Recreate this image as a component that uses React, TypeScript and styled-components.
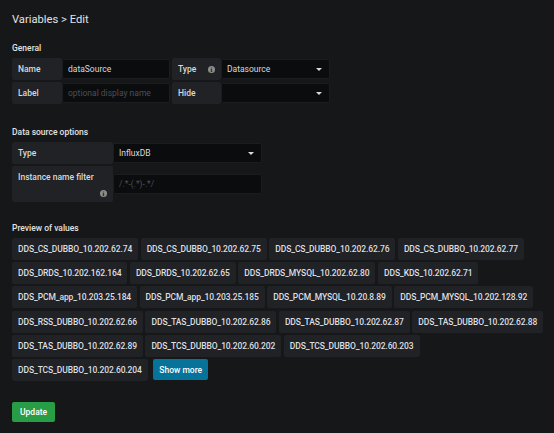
import React from 'react'
import styled, { createGlobalStyle } from 'styled-components'

const GlobalStyle = createGlobalStyle`
  html, body {
    margin: 0;
    padding: 0;
    background: #161719;
  }
  body {
    font-family: Roboto, 'Liberation Sans', sans-serif;
    color: #d8d9da;
    font-size: 8.5px;
  }
`

const Page = styled.div`
  width: 554px;
  height: 433px;
  box-sizing: border-box;
  padding: 12px 2px 0 12px;
  overflow: hidden;
`

const Title = styled.h2`
  margin: 0;
  font-size: 11.2px;
  line-height: 16px;
  font-weight: 400;
  color: #e3e3e3;
`

const SectionHeading = styled.h5<{ $top: number; $bottom: number }>`
  margin: ${(p) => p.$top}px 0 ${(p) => p.$bottom}px;
  font-size: 8.5px;
  line-height: 12px;
  font-weight: 500;
  color: #e3e3e3;
`

const FormRow = styled.div`
  display: flex;
  align-items: center;
  gap: 2px;
  margin-bottom: 2px;
`

const Field = styled.div`
  display: flex;
  align-items: center;
`

const Label = styled.label<{ $width: number; $tall?: boolean }>`
  box-sizing: border-box;
  width: ${(p) => p.$width}px;
  height: ${(p) => (p.$tall ? 36 : 22)}px;
  padding: ${(p) => (p.$tall ? '6px 6px 0' : '0 6px')};
  display: flex;
  align-items: ${(p) => (p.$tall ? 'flex-start' : 'center')};
  justify-content: space-between;
  position: relative;
  background: #202226;
  border-radius: 2px;
  font-weight: 500;
  color: #d8d9da;
`

const InfoIcon = styled.span<{ $corner?: boolean }>`
  width: 7px;
  height: 7px;
  border-radius: 50%;
  background: #8e8e8e;
  color: #202226;
  font-size: 6px;
  font-weight: 700;
  line-height: 7px;
  text-align: center;
  font-family: 'DejaVu Serif', serif;
  ${(p) => (p.$corner ? 'position: absolute; right: 6px; bottom: 5px;' : '')}
`

const Input = styled.input<{ $width: number }>`
  box-sizing: border-box;
  width: ${(p) => p.$width}px;
  height: 20px;
  padding: 0 5px;
  background: #0b0c0e;
  border: 1px solid #1b1c1f;
  border-radius: 2px;
  color: #d8d9da;
  font-family: inherit;
  font-size: 8.5px;
  outline: none;
  &::placeholder {
    color: #4d4f53;
  }
`

const Select = styled.div<{ $width: number }>`
  box-sizing: border-box;
  width: ${(p) => p.$width}px;
  height: 20px;
  padding: 0 5px;
  display: flex;
  align-items: center;
  justify-content: space-between;
  background: #0b0c0e;
  border: 1px solid #1b1c1f;
  border-radius: 2px;
  color: #d8d9da;
`

const Caret = styled.span`
  width: 0;
  height: 0;
  margin-right: 2px;
  border-left: 3px solid transparent;
  border-right: 3px solid transparent;
  border-top: 3px solid #d8d9da;
`

const Tags = styled.div`
  display: flex;
  flex-wrap: wrap;
  align-items: center;
  gap: 2.2px 2.5px;
  width: 538px;
`

const Tag = styled.span`
  box-sizing: border-box;
  height: 22px;
  padding: 0 6px;
  display: inline-flex;
  align-items: center;
  background: #202226;
  border-radius: 2px;
  font-weight: 500;
  letter-spacing: -0.1px;
  color: #dedfe0;
  white-space: nowrap;
`

const Button = styled.button<{ $variant: 'blue' | 'green' }>`
  box-sizing: border-box;
  height: ${(p) => (p.$variant === 'blue' ? 21 : 20)}px;
  padding: 0 ${(p) => (p.$variant === 'blue' ? 6 : 8)}px;
  border: none;
  border-radius: 2px;
  background: ${(p) => (p.$variant === 'blue' ? '#05739a' : '#299c46')};
  color: #fff;
  font-family: inherit;
  font-size: 8.5px;
  font-weight: 500;
  cursor: pointer;
  margin-left: ${(p) => (p.$variant === 'blue' ? 3 : 0)}px;
`

const Footer = styled.div`
  margin-top: 21px;
`

const values = [
  'DDS_CS_DUBBO_10.202.62.74',
  'DDS_CS_DUBBO_10.202.62.75',
  'DDS_CS_DUBBO_10.202.62.76',
  'DDS_CS_DUBBO_10.202.62.77',
  'DDS_DRDS_10.202.162.164',
  'DDS_DRDS_10.202.62.65',
  'DDS_DRDS_MYSQL_10.202.62.80',
  'DDS_KDS_10.202.62.71',
  'DDS_PCM_app_10.203.25.184',
  'DDS_PCM_app_10.203.25.185',
  'DDS_PCM_MYSQL_10.20.8.89',
  'DDS_PCM_MYSQL_10.202.128.92',
  'DDS_RSS_DUBBO_10.202.62.66',
  'DDS_TAS_DUBBO_10.202.62.86',
  'DDS_TAS_DUBBO_10.202.62.87',
  'DDS_TAS_DUBBO_10.202.62.88',
  'DDS_TAS_DUBBO_10.202.62.89',
  'DDS_TCS_DUBBO_10.202.60.202',
  'DDS_TCS_DUBBO_10.202.60.203',
  'DDS_TCS_DUBBO_10.202.60.204',
]

const App = () => {
  return (
    <Page>
      <GlobalStyle />
      <Title>Variables &gt; Edit</Title>

      <SectionHeading $top={14} $bottom={4}>General</SectionHeading>
      <FormRow>
        <Field>
          <Label $width={50}>Name</Label>
          <Input $width={108} defaultValue="dataSource" />
        </Field>
        <Field>
          <Label $width={49}>
            Type <InfoIcon>i</InfoIcon>
          </Label>
          <Select $width={109}>
            Datasource <Caret />
          </Select>
        </Field>
      </FormRow>
      <FormRow>
        <Field>
          <Label $width={50}>Label</Label>
          <Input $width={108} placeholder="optional display name" />
        </Field>
        <Field>
          <Label $width={49}>Hide</Label>
          <Select $width={109}>
            <span />
            <Caret />
          </Select>
        </Field>
      </FormRow>

      <SectionHeading $top={22} $bottom={4}>Data source options</SectionHeading>
      <FormRow>
        <Field>
          <Label $width={101}>Type</Label>
          <Select $width={149}>
            InfluxDB <Caret />
          </Select>
        </Field>
      </FormRow>
      <FormRow>
        <Field>
          <Label $width={101} $tall>
            Instance name filter
            <InfoIcon $corner>i</InfoIcon>
          </Label>
          <Input $width={149} placeholder="/.*-(.*)-.*/" />
        </Field>
      </FormRow>

      <SectionHeading $top={20} $bottom={4}>Preview of values</SectionHeading>
      <Tags>
        {values.map((v) => (
          <Tag key={v}>{v}</Tag>
        ))}
        <Button $variant="blue">Show more</Button>
      </Tags>

      <Footer>
        <Button $variant="green">Update</Button>
      </Footer>
    </Page>
  )
}

export default App
